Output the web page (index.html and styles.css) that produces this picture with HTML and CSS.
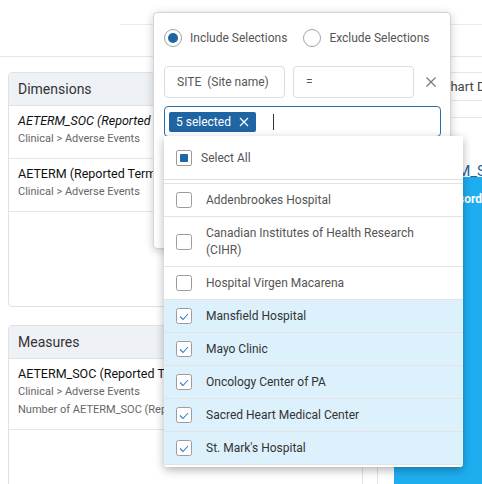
FILE: index.html
```html
<!DOCTYPE html>
<html lang="en">
<head>
    <meta charset="UTF-8">
    <meta name="viewport" content="width=device-width, initial-scale=1.0">
    <title>Filter - Site name</title>
    <link rel="stylesheet" href="styles.css">
</head>
<body>
    <div class="page">
        <div class="topbar">
            <div class="topbar-line"></div>
        </div>

        <div class="main">
            <!-- left column: dimensions and measures -->
            <div class="left-col">
                <div class="panel dims">
                    <div class="panel-header">Dimensions</div>
                    <div class="field-item">
                        <div class="field-name italic">AETERM_SOC (Reported Term System Organ Class)</div>
                        <div class="field-sub">Clinical &gt; Adverse Events</div>
                    </div>
                    <div class="field-item">
                        <div class="field-name">AETERM (Reported Term for the Adverse Event)</div>
                        <div class="field-sub">Clinical &gt; Adverse Events</div>
                    </div>
                </div>
                <div class="panel measures">
                    <div class="panel-header">Measures</div>
                    <div class="field-item">
                        <div class="field-name">AETERM_SOC (Reported Term System Organ Class)</div>
                        <div class="field-sub">Clinical &gt; Adverse Events</div>
                        <div class="field-sub">Number of AETERM_SOC (Reported Term)</div>
                    </div>
                </div>
            </div>

            <!-- right column: chart area -->
            <div class="right-col">
                <div class="toolbar"><span class="toolbar-label">Chart Dynamics</span></div>
                <div class="subbar"></div>
                <div class="chart-col">
                    <div class="chart-title">AETERM_SOC</div>
                    <div class="chart-box">
                        <div class="chart-label">Cardiac disorders</div>
                    </div>
                </div>
            </div>
        </div>

        <!-- filter popover -->
        <div class="popover">
            <div class="radio-row">
                <label class="radio">
                    <svg width="18" height="18" viewBox="0 0 18 18"><circle cx="9" cy="9" r="8.5" fill="#fff" stroke="#a3a3a3"/><circle cx="9" cy="9" r="5" fill="#1f64a3"/></svg>
                    <span>Include Selections</span>
                </label>
                <label class="radio second">
                    <svg width="18" height="18" viewBox="0 0 18 18"><circle cx="9" cy="9" r="8.5" fill="#fff" stroke="#a3a3a3"/></svg>
                    <span>Exclude Selections</span>
                </label>
            </div>
            <div class="cond-row">
                <div class="cond-box">SITE&nbsp;&nbsp;(Site name)</div>
                <div class="cond-box">=</div>
                <div class="cond-remove">
                    <svg width="10" height="10" viewBox="0 0 10 10"><path d="M0.5 0.5L9.5 9.5M9.5 0.5L0.5 9.5" stroke="#777" stroke-width="1.2"/></svg>
                </div>
            </div>
            <div class="multi-input">
                <span class="chip">5 selected
                    <svg width="10" height="10" viewBox="0 0 10 10"><path d="M1 1L9 9M9 1L1 9" stroke="#fff" stroke-width="1.3"/></svg>
                </span>
                <span class="caret"></span>
            </div>
        </div>

        <!-- options dropdown -->
        <div class="dropdown">
            <div class="select-all">
                <span class="check partial"><span></span></span>
                <span>Select All</span>
            </div>
            <div class="options" id="options"></div>
        </div>
    </div>

    <script>
        // Site names in the dropdown, with selection state
        const sites = [
            { name: 'Addenbrookes Hospital', selected: false },
            { name: 'Canadian Institutes of Health Research (CIHR)', selected: false },
            { name: 'Hospital Virgen Macarena', selected: false },
            { name: 'Mansfield Hospital', selected: true },
            { name: 'Mayo Clinic', selected: true },
            { name: 'Oncology Center of PA', selected: true },
            { name: 'Sacred Heart Medical Center', selected: true },
            { name: "St. Mark's Hospital", selected: true }
        ];

        const tick = '<svg width="16" height="16" viewBox="0 0 16 16"><rect x="0.5" y="0.5" width="15" height="15" rx="2" fill="#fff" stroke="#9c9c9c"/>';
        const mark = '<polyline points="4,8.5 7,11.5 12,6" fill="none" stroke="#2f7fd0" stroke-width="1.1"/>';

        const list = document.getElementById('options');
        sites.forEach(site => {
            list.innerHTML += `
                <div class="option${site.selected ? ' selected' : ''}">
                    <span class="box">${tick}${site.selected ? mark : ''}</svg></span>
                    <span class="option-text">${site.name}</span>
                </div>
            `;
        });
    </script>
</body>
</html>
```

FILE: styles.css
```css
html, body {
    margin: 0;
    height: 100%;
    overflow: hidden;
    font-family: Roboto, "Liberation Sans", sans-serif;
    background: #fff;
}
.page {
    position: relative;
    width: 100%;
    height: 100%;
}
.topbar {
    height: 56px;
    border-bottom: 1px solid #e6e6e6;
}
.topbar-line {
    margin-left: 120px;
    height: 24px;
    border-bottom: 1px solid #ebebeb;
}
.main {
    display: flex;
    gap: 14px;
    padding: 15px 0 0 8px;
}
.left-col {
    width: 355px;
    flex-shrink: 0;
    display: flex;
    flex-direction: column;
    gap: 18px;
}
.panel {
    border: 1px solid #e1e1e1;
    border-radius: 4px;
    overflow: hidden;
}
.panel.dims {
    height: 235px;
    box-sizing: border-box;
}
.panel.measures {
    height: 200px;
}
.panel-header {
    height: 32px;
    line-height: 32px;
    padding-left: 9px;
    background: #eef2f7;
    border-bottom: 1px solid #e1e1e1;
    font-size: 14px;
    color: #333;
}
.field-item {
    padding: 6px 9px 10px;
    border-bottom: 1px solid #e6e6e6;
    white-space: nowrap;
    overflow: hidden;
}
.field-name {
    font-size: 12.5px;
    line-height: 18px;
    color: #111;
}
.field-name.italic {
    font-style: italic;
}
.field-sub {
    font-size: 11px;
    line-height: 18px;
    color: #666;
}
.right-col {
    flex: 1;
    min-width: 0;
    display: flex;
    flex-direction: column;
    border-left: 1px solid #e3e3e3;
}
.toolbar {
    height: 27px;
    border-top: 1px solid #e6e6e6;
    border-bottom: 1px solid #e6e6e6;
    padding-left: 64px;
    white-space: nowrap;
    overflow: hidden;
}
.toolbar-label {
    font-size: 13px;
    line-height: 27px;
    color: #444;
}
.subbar {
    height: 16px;
    border-bottom: 1px solid #e6e6e6;
}
.chart-col {
    flex: 1;
    min-width: 0;
    overflow: hidden;
    padding-left: 16px;
}
.chart-title {
    height: 59px;
    box-sizing: border-box;
    padding: 44px 0 0 18px;
    font-size: 15px;
    color: #1f64a3;
    white-space: nowrap;
}
.chart-box {
    height: 320px;
    background: #1eaef0;
    padding: 15px 0 0 10px;
    white-space: nowrap;
}
.chart-label {
    font-size: 12px;
    font-weight: bold;
    color: #fff;
}

/* filter popover */
.popover {
    position: absolute;
    left: 153px;
    top: 12px;
    width: 298px;
    height: 237px;
    box-sizing: border-box;
    padding: 15px 10px;
    background: #fff;
    border: 1px solid #d4d4d4;
    border-radius: 4px;
    box-shadow: 0 2px 10px rgba(0,0,0,0.2);
}
.radio-row {
    display: flex;
    align-items: center;
    height: 20px;
}
.radio {
    display: flex;
    align-items: center;
    gap: 8px;
    font-size: 12px;
    color: #555;
}
.radio.second {
    margin-left: 16px;
}
.cond-row {
    display: flex;
    align-items: center;
    gap: 8px;
    margin-top: 18px;
}
.cond-box {
    width: 121px;
    height: 32px;
    flex-shrink: 0;
    box-sizing: border-box;
    border: 1px solid #dcdcdc;
    border-radius: 4px;
    padding-left: 12px;
    line-height: 30px;
    font-size: 12px;
    color: #555;
}
.cond-remove {
    width: 18px;
    flex-shrink: 0;
    display: flex;
    justify-content: center;
}
.multi-input {
    display: flex;
    align-items: center;
    width: 277px;
    height: 31px;
    box-sizing: border-box;
    margin-top: 8px;
    padding-left: 4px;
    border: 1px solid #2e6ea8;
    border-radius: 4px;
}
.chip {
    display: flex;
    align-items: center;
    gap: 8px;
    height: 20px;
    padding: 0 7px;
    background: #1f64a3;
    border-radius: 2px;
    color: #fff;
    font-size: 12px;
}
.caret {
    width: 1px;
    height: 16px;
    margin-left: 17px;
    background: #333;
}

/* dropdown */
.dropdown {
    position: absolute;
    left: 164px;
    top: 136px;
    width: 299px;
    height: 331px;
    box-sizing: border-box;
    background: #fff;
    border-radius: 0 0 3px 3px;
    box-shadow: 0 3px 10px rgba(0,0,0,0.3);
}
.select-all {
    display: flex;
    align-items: center;
    gap: 9px;
    height: 43px;
    padding-left: 12px;
    border-bottom: 1px solid #dedede;
    font-size: 12px;
    color: #555;
}
.check {
    width: 16px;
    height: 16px;
    box-sizing: border-box;
    border: 1px solid #9c9c9c;
    border-radius: 2px;
    display: flex;
    align-items: center;
    justify-content: center;
}
.check.partial span {
    width: 8px;
    height: 8px;
    background: #1f64a3;
    border-radius: 1px;
}
.options {
    margin-top: 3px;
    border-top: 1px solid #e3e3e3;
}
.option {
    display: flex;
    align-items: center;
    gap: 14px;
    padding: 7.5px 12px;
    border-bottom: 1px solid #e3e3e3;
    font-size: 12px;
    line-height: 17px;
    color: #555;
}
.option.selected {
    background: #ddf1fc;
    color: #333;
}
.box {
    display: flex;
    flex-shrink: 0;
}
.option-text {
    padding-right: 24px;
}
```
